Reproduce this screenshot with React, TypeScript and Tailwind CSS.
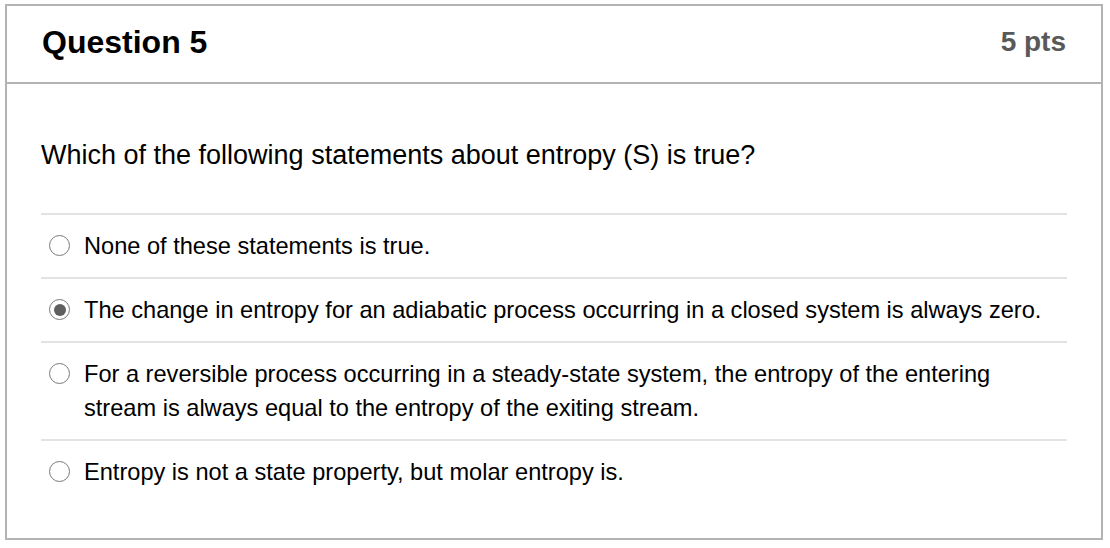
const options = [
  { text: 'None of these statements is true.', checked: false },
  {
    text: 'The change in entropy for an adiabatic process occurring in a closed system is always zero.',
    checked: true,
  },
  {
    text: 'For a reversible process occurring in a steady-state system, the entropy of the entering stream is always equal to the entropy of the exiting stream.',
    checked: false,
  },
  { text: 'Entropy is not a state property, but molar entropy is.', checked: false },
];

function Radio({ checked }: { checked: boolean }) {
  return (
    <span className="mt-[6px] flex h-[21px] w-[21px] shrink-0 items-center justify-center rounded-full border-[1.5px] border-[#7a7a7a] bg-white">
      {checked && <span className="h-[12px] w-[12px] rounded-full bg-[#5f5f5f]" />}
    </span>
  );
}

export default function App() {
  return (
    <div className="min-h-[548px] bg-white pl-[5px] pt-[4px] font-['Liberation_Sans',Arial,sans-serif]">
      <div className="w-[1098px] border-2 border-[#b3b3b3] bg-white">
        {/* header */}
        <div className="flex h-[78px] items-center justify-between border-b-2 border-[#b3b3b3] px-[35px] pb-[4px]">
          <h2 className="text-[32px] font-bold text-black">Question 5</h2>
          <span className="text-[28px] font-bold text-[#595959]">5 pts</span>
        </div>

        {/* body */}
        <div className="px-[34px] pb-[35px] pt-[51px]">
          <p className="text-[27px] leading-[40px] text-black">
            Which of the following statements about entropy (S) is true?
          </p>

          <div className="mt-[38px]">
            {options.map((o, i) => (
              <div key={i} className="flex items-start gap-[14px] border-t-2 border-[#e3e3e3] py-[14px] pl-[8px]">
                <Radio checked={o.checked} />
                <span className="max-w-[963px] text-[23.6px] leading-[34px] text-black">{o.text}</span>
              </div>
            ))}
          </div>
        </div>
      </div>
    </div>
  );
}
